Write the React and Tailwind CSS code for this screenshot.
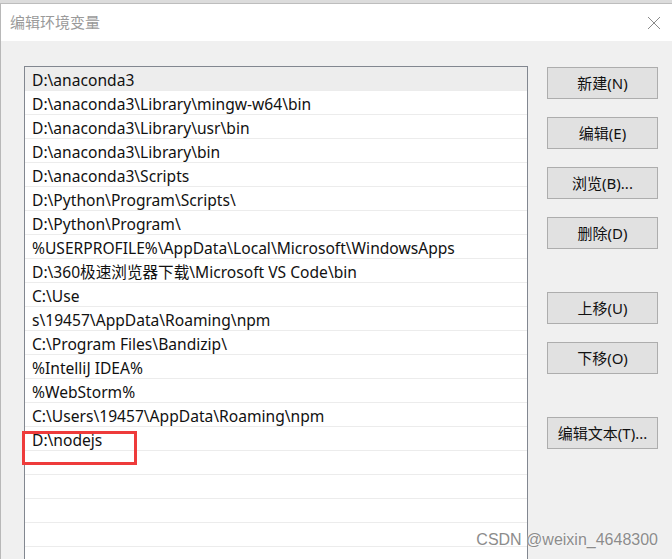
import React from 'react';

const paths = [
  'D:\\anaconda3',
  'D:\\anaconda3\\Library\\mingw-w64\\bin',
  'D:\\anaconda3\\Library\\usr\\bin',
  'D:\\anaconda3\\Library\\bin',
  'D:\\anaconda3\\Scripts',
  'D:\\Python\\Program\\Scripts\\',
  'D:\\Python\\Program\\',
  '%USERPROFILE%\\AppData\\Local\\Microsoft\\WindowsApps',
  'D:\\360极速浏览器下载\\Microsoft VS Code\\bin',
  'C:\\Use',
  's\\19457\\AppData\\Roaming\\npm',
  'C:\\Program Files\\Bandizip\\',
  '%IntelliJ IDEA%',
  '%WebStorm%',
  'C:\\Users\\19457\\AppData\\Roaming\\npm',
  'D:\\nodejs',
  '', '', '', '', '',
];

const font = { fontFamily: '"Noto Sans", "Noto Sans CJK SC", sans-serif' };

const Btn = ({ label, className = '' }) => (
  <button className={`h-[32px] w-[111px] shrink-0 bg-[#e1e1e1] border border-[#adadad] text-[15px] text-[#111] flex items-center justify-center ${className}`}>
    {label}
  </button>
);

const App = () => {
  return (
    <div className="relative w-[672px] h-[559px] overflow-hidden bg-[#f0f0f0] flex flex-col" style={font}>
      <div className="h-[4px] shrink-0 bg-[#dcdcdc] border-b border-[#bdbdbd]" />
      <div className="h-[37px] shrink-0 bg-white flex items-center justify-between pl-[9px] pr-[11px] border-l border-[#b8b8b8]">
        <span className="text-[15px] text-[#9a9a9a]">编辑环境变量</span>
        <svg width="14" height="14" viewBox="0 0 14 14" className="text-[#8a8a8a]">
          <path d="M1 1 L13 13 M13 1 L1 13" stroke="currentColor" strokeWidth="1" fill="none" />
        </svg>
      </div>
      <div className="flex-1 min-h-0 overflow-hidden flex pl-[23px] pt-[25px] border-l border-[#b8b8b8]">
        <div className="w-[504px] h-[600px] shrink-0 bg-white border border-[#828790]">
          {paths.map((p, i) => (
            <div
              key={i}
              className={`h-[24px] px-[7px] pt-[4px] flex items-center border-b border-[#ececec] text-[15.6px] text-[#111] whitespace-nowrap ${i === 0 ? 'bg-[#ededed]' : ''}`}
            >
              {p}
            </div>
          ))}
        </div>
        <div className="ml-[19px] pt-[1px] flex flex-col">
          <Btn label="新建(N)" />
          <Btn label="编辑(E)" className="mt-[18px]" />
          <Btn label="浏览(B)..." className="mt-[18px]" />
          <Btn label="删除(D)" className="mt-[18px]" />
          <Btn label="上移(U)" className="mt-[43px]" />
          <Btn label="下移(O)" className="mt-[18px]" />
          <Btn label="编辑文本(T)..." className="mt-[43px]" />
        </div>
      </div>
      <div className="absolute left-[22px] top-[431px] w-[115px] h-[34px] border-[3px] border-[#ee3b3b]" />
      <div
        className="absolute right-[14px] bottom-[7px] text-[16px] text-[#8c8c8c]"
        style={{ fontFamily: '"Liberation Sans", Arial, sans-serif', textShadow: '0 0 2px #fff' }}
      >
        CSDN @weixin_4648300
      </div>
    </div>
  );
};

export default App;
